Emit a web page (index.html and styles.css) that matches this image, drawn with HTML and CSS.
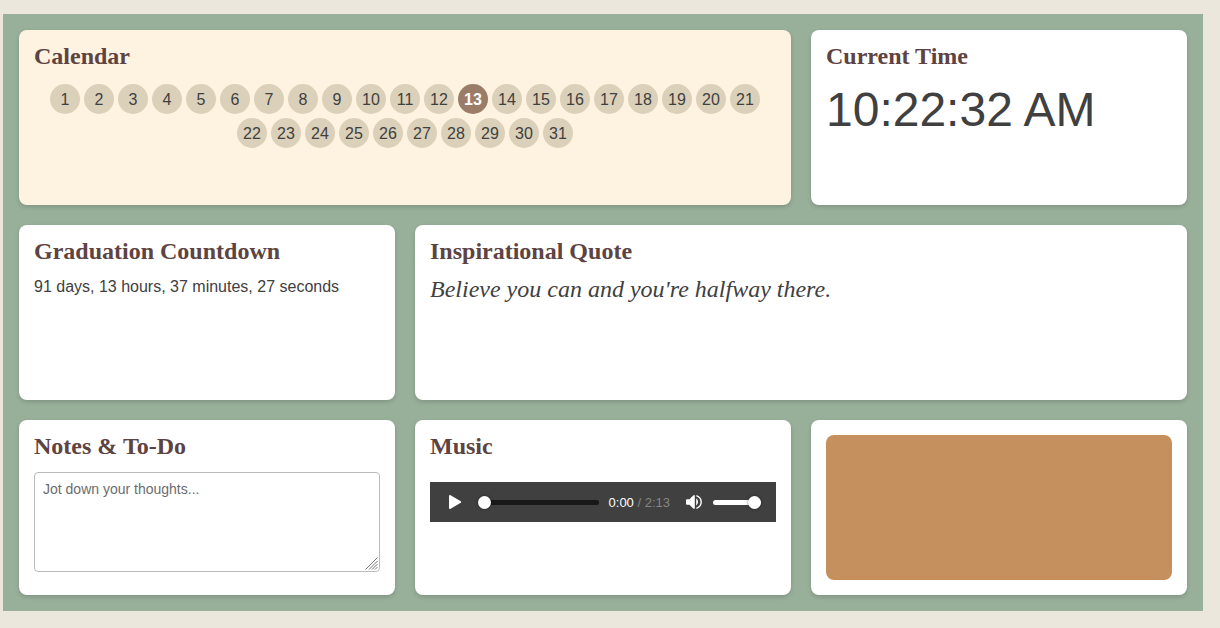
FILE: index.html
```html
<!DOCTYPE html>
<html lang="en">
<head>
<meta charset="utf-8">
<meta name="viewport" content="width=device-width, initial-scale=1">
<title>Dashboard</title>
<link rel="stylesheet" href="styles.css">
</head>
<body>
<main class="dashboard">
  <section class="card card-wide card-calendar">
    <h2 class="card-title">Calendar</h2>
    <div class="days">
      <span class="day">1</span><span class="day">2</span><span class="day">3</span><span class="day">4</span><span class="day">5</span><span class="day">6</span><span class="day">7</span><span class="day">8</span><span class="day">9</span><span class="day">10</span><span class="day">11</span><span class="day">12</span><span class="day day-today">13</span><span class="day">14</span><span class="day">15</span><span class="day">16</span><span class="day">17</span><span class="day">18</span><span class="day">19</span><span class="day">20</span><span class="day">21</span><span class="day">22</span><span class="day">23</span><span class="day">24</span><span class="day">25</span><span class="day">26</span><span class="day">27</span><span class="day">28</span><span class="day">29</span><span class="day">30</span><span class="day">31</span>
    </div>
  </section>
  <section class="card">
    <h2 class="card-title">Current Time</h2>
    <div class="clock">10:22:32 AM</div>
  </section>
  <section class="card">
    <h2 class="card-title">Graduation Countdown</h2>
    <div class="countdown">91 days, 13 hours, 37 minutes, 27 seconds</div>
  </section>
  <section class="card card-wide">
    <h2 class="card-title">Inspirational Quote</h2>
    <div class="quote">Believe you can and you're halfway there.</div>
  </section>
  <section class="card">
    <h2 class="card-title"><label for="notes">Notes &amp; To-Do</label></h2>
    <div class="notes-wrap">
      <textarea class="notes" id="notes" placeholder="Jot down your thoughts..."></textarea>
      <svg class="grip" viewBox="0 0 13 13" aria-hidden="true"><path d="M0.5 12.5L12.5 .5M4 12.5L12.5 4M7 12.5L12.5 7M10 12.5L12.5 10" stroke="#777" fill="none"/></svg>
    </div>
  </section>
  <section class="card">
    <h2 class="card-title">Music</h2>
    <div class="player">
      <button class="icon-button play" type="button" aria-label="Play">
        <svg width="14" height="16" viewBox="0 0 14 16"><path d="M1 2.2Q1 .4 2.6 1.3L12.8 7.2Q14 8 12.8 8.8L2.6 14.7Q1 15.6 1 13.8Z" fill="#fff"/></svg>
      </button>
      <input class="range seek" type="range" min="0" max="133" value="0" aria-label="Seek">
      <div class="time"><span class="elapsed">0:00</span> / 2:13</div>
      <button class="icon-button mute" type="button" aria-label="Mute">
        <svg width="18" height="16" viewBox="0 0 18 16"><path d="M1 6Q1 5.2 2 5.2H4.5L8.2 1.6Q9.8 .4 9.8 2.2V13.8Q9.8 15.6 8.2 14.4L4.5 10.8H2Q1 10.8 1 10Z" fill="#fff"/><path d="M11.2 4.3Q15 8 11.2 11.7Z" fill="#fff"/><path d="M11.4 1.6Q16.2 3.4 16.2 8T11.4 14.4" fill="none" stroke="#fff" stroke-width="1.4"/></svg>
      </button>
      <input class="range volume" type="range" min="0" max="100" value="100" aria-label="Volume">
    </div>
  </section>
  <section class="card">
    <div class="swatch"></div>
  </section>
</main>
</body>
</html>
```
FILE: styles.css
```css
* {
  box-sizing: border-box;
}

body {
  margin: 0;
  padding: 14px 17px 17px 3px;
  background: #ece7dc;
  color: #404040;
  font: 16px "Liberation Sans", Arial, sans-serif;
}

.dashboard {
  display: grid;
  grid-template-columns: repeat(3, minmax(0, 1fr));
  grid-auto-rows: 1fr;
  gap: 20px;
  max-width: 1200px;
  padding: 16px;
  background: #98af9a;
}

.card {
  display: flex;
  flex-direction: column;
  min-height: 175px;
  padding: 15px;
  border-radius: 8px;
  background: #fff;
  box-shadow: 0 2px 4px rgba(0, 0, 0, 0.15);
}

.card-wide {
  grid-column: span 2;
}

.card-calendar {
  background: #fef2e0;
}

.card-title {
  margin: 0 0 14px;
  color: #5d4342;
  font: bold 24px/23px "Liberation Serif", "Times New Roman", serif;
}

.days {
  display: flex;
  flex-wrap: wrap;
  justify-content: center;
}

.day {
  width: 30px;
  height: 30px;
  margin: 2px;
  border-radius: 50%;
  background: #dbd0b9;
  line-height: 32px;
  text-align: center;
}

.day-today {
  background: #9b7c68;
  color: #fff;
  font-weight: bold;
}

.clock {
  font-size: 48px;
  line-height: 55px;
}

.countdown {
  line-height: 20px;
}

.quote {
  font: italic 24px/25px "Liberation Serif", "Times New Roman", serif;
}

.notes-wrap {
  position: relative;
  display: flex;
}

.notes {
  width: 100%;
  height: 100px;
  margin: 0;
  padding: 8px;
  border: 1px solid #bbb;
  border-radius: 4px;
  background: #fff;
  color: #404040;
  font: 14px/16px "Liberation Sans", Arial, sans-serif;
  resize: vertical;
}

.notes::placeholder {
  color: #6c6c6c;
}

.notes::-webkit-resizer {
  background: transparent;
}

.grip {
  position: absolute;
  right: 2px;
  bottom: 2px;
  width: 13px;
  height: 13px;
  pointer-events: none;
}

.player {
  display: flex;
  align-items: center;
  height: 40px;
  margin-top: 10px;
  padding: 0 15px 0 18px;
  background: #404040;
}

.icon-button {
  display: flex;
  padding: 0;
  border: 0;
  background: none;
}

.play {
  margin-right: 16px;
}

.mute {
  margin: 0 10px 0 15px;
}

.range {
  height: 14px;
  margin: 0;
  background: none;
  appearance: none;
}

.range::-webkit-slider-runnable-track {
  height: 5px;
  border-radius: 3px;
  background: #181818;
}

.range::-webkit-slider-thumb {
  width: 13px;
  height: 13px;
  margin-top: -4px;
  border-radius: 50%;
  background: #fff;
  box-shadow: 0 0 3px rgba(0, 0, 0, 0.5);
  appearance: none;
}

.seek {
  flex: 1;
  min-width: 0;
}

.volume {
  width: 48px;
}

.volume::-webkit-slider-runnable-track {
  background: #fff;
}

.time {
  margin-left: 10px;
  color: #868686;
  font-size: 13px;
}

.elapsed {
  color: #fff;
}

.swatch {
  flex: 1;
  border-radius: 8px;
  background: #c6905e;
}
```
